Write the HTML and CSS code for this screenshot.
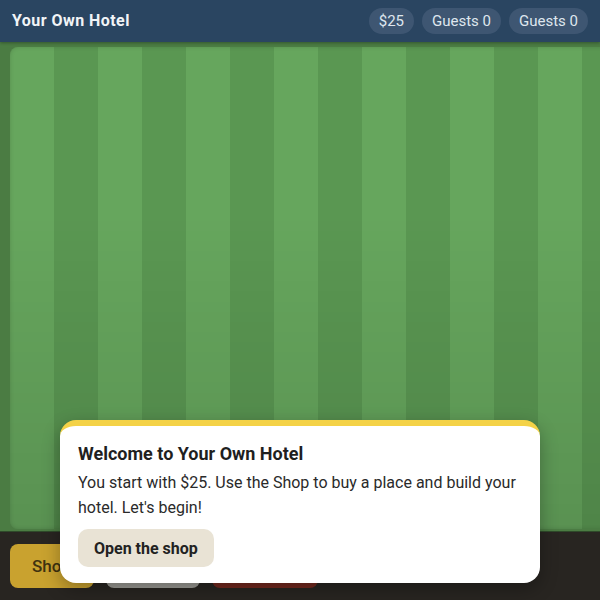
FILE: index.html
```html
<!DOCTYPE html>
<html lang="en">
<head>
    <meta charset="UTF-8">
    <meta name="viewport" content="width=device-width, initial-scale=1.0">
    <title>Your Own Hotel</title>
    <link rel="stylesheet" href="styles.css">
</head>
<body>
    <div class="app">
        <header class="topbar">
            <h1 class="title">Your Own Hotel</h1>
            <div class="stats">
                <span class="pill">$25</span>
                <span class="pill">Guests 0</span>
                <span class="pill">Guests 0</span>
            </div>
        </header>

        <main class="world">
            <div class="field"></div>
        </main>

        <footer class="toolbar">
            <button class="tool tool-shop">Shop</button>
            <button class="tool tool-build" aria-label="Build"></button>
            <button class="tool tool-sell" aria-label="Sell"></button>
        </footer>

        <div class="welcome">
            <h3>Welcome to Your Own Hotel</h3>
            <p>You start with $25. Use the Shop to buy a place and build your hotel. Let's begin!</p>
            <button class="btn-open">Open the shop</button>
        </div>
    </div>
</body>
</html>
```

FILE: styles.css
```css
* {
    box-sizing: border-box;
}
body {
    margin: 0;
    font-family: Roboto, "Liberation Sans", Arial, sans-serif;
    background-color: #282521;
}
.app {
    position: relative;
    width: 600px;
    height: 600px;
    display: flex;
    flex-direction: column;
    overflow: hidden;
}
.topbar {
    height: 42px;
    background-color: #2a4561;
    display: flex;
    align-items: center;
    justify-content: space-between;
    padding: 0 12px;
    box-shadow: 0 1px 3px rgba(0, 0, 0, 0.3);
    position: relative;
    z-index: 1;
}
.title {
    margin: 0;
    font-size: 16px;
    font-weight: 700;
    color: #f1f4f7;
    letter-spacing: 0.45px;
}
.stats {
    display: flex;
    gap: 8px;
}
.pill {
    background-color: #3e5672;
    color: #dfe6ee;
    font-size: 15px;
    height: 26px;
    line-height: 26px;
    padding: 0 10px;
    border-radius: 13px;
}
.world {
    height: 491px;
    background-color: #4b7c43;
    padding: 5px 0 2px 10px;
    border-bottom: 1px solid #2f4a2a;
}
.field {
    width: 640px;
    height: 100%;
    border-radius: 8px 0 0 8px;
    background-image:
        linear-gradient(to bottom, rgba(0, 0, 0, 0) 35%, rgba(0, 0, 0, 0.12) 100%),
        repeating-linear-gradient(to right, #66a65d 0, #66a65d 44px, #5a9752 44px, #5a9752 88px);
    box-shadow: inset 0 0 4px rgba(0, 0, 0, 0.15);
}
.toolbar {
    flex: 1;
    display: flex;
    gap: 12px;
    padding: 12px 10px;
    background-color: #282521;
}
.tool {
    height: 44px;
    border: none;
    border-radius: 8px;
    font-family: inherit;
    font-size: 17px;
    font-weight: 500;
    padding: 0 22px;
}
.tool-shop {
    width: 84px;
    background-color: #c9a22f;
    color: #3f3210;
    text-align: left;
}
.tool-build {
    width: 94px;
    background-color: #9b9a94;
}
.tool-sell {
    width: 106px;
    background-color: #74291f;
}
.welcome {
    position: absolute;
    left: 60px;
    top: 420px;
    width: 480px;
    height: 163px;
    background: white;
    border-top: 6px solid #f4d247;
    border-radius: 16px;
    padding: 17px 18px 0;
    box-shadow: 0 6px 18px rgba(0, 0, 0, 0.3);
    color: #222;
}
.welcome h3 {
    margin: 0 0 6px;
    font-size: 18px;
    font-weight: 700;
    color: #1f1f1f;
}
.welcome p {
    margin: 0 0 9px;
    font-size: 16px;
    line-height: 25px;
    color: #2a2a2a;
}
.btn-open {
    height: 38px;
    padding: 0 16px;
    border: none;
    border-radius: 10px;
    background-color: #e9e3d5;
    color: #222;
    font-family: inherit;
    font-size: 16px;
    font-weight: 700;
}
```
